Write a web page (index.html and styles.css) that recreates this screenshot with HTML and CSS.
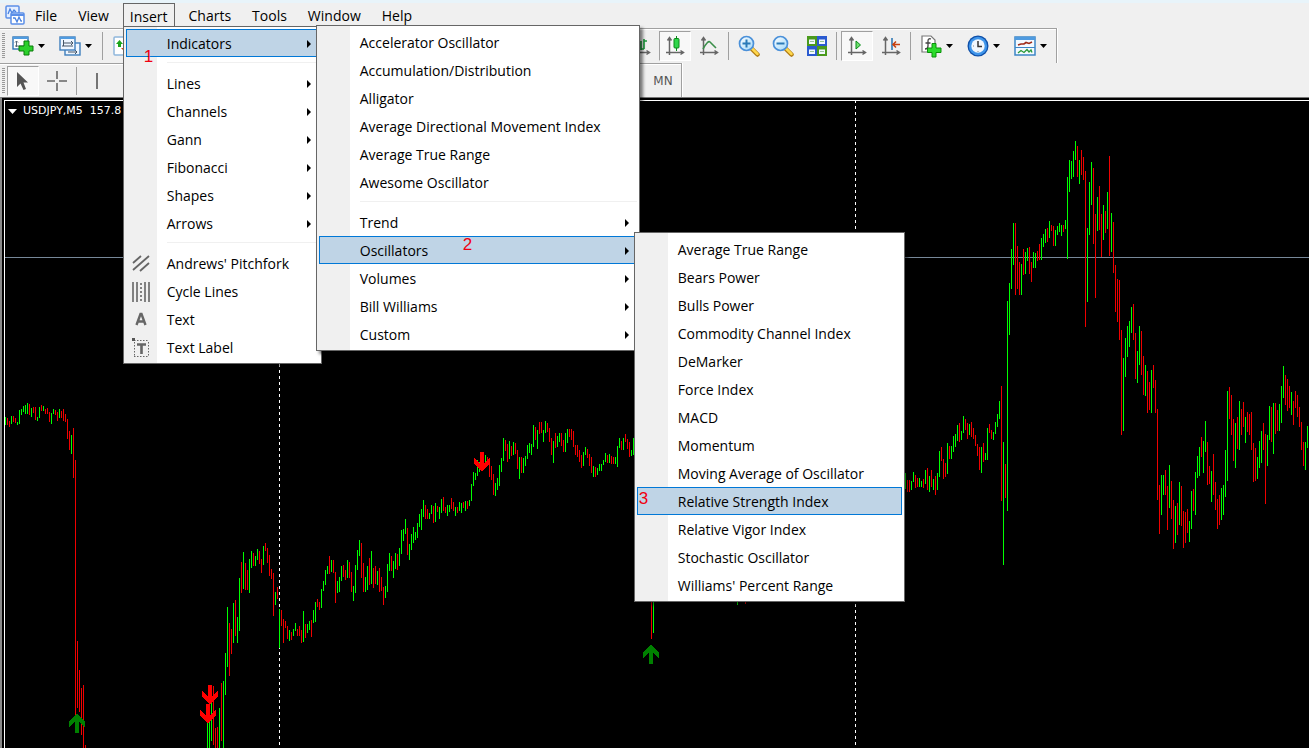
FILE: index.html
```html
<!DOCTYPE html>
<html lang="en">
<head>
<meta charset="utf-8">
<title>USDJPY,M5</title>
<link rel="stylesheet" href="styles.css">
</head>
<body>
<svg class="defs" width="0" height="0" aria-hidden="true">
  <defs>
    <symbol id="axes" viewBox="0 0 20 20"><path d="M4.500 2V19M1 16.500H18M2.500 4.500L4.500 1.500L6.500 4.500M15.500 14.500L18.500 16.500L15.500 18.500" fill="none" stroke="#666" stroke-width="1.500"/></symbol>
    <symbol id="caret" viewBox="0 0 7 4"><path d="M0 0H7L3.500 4Z"/></symbol>
    <symbol id="up" viewBox="-9 0 18 19"><path d="M0 0L8 7V13L2 8V19H-2V8L-8 13V7Z"/></symbol>
    <linearGradient id="glass" x2="1" y2="1"><stop offset="0" stop-color="#fff"/><stop offset="1" stop-color="#9fd8fa"/></linearGradient>
    <symbol id="lens" viewBox="0 0 22 22"><path d="M13 13L19.500 19.500" stroke="#b07a10" stroke-width="4.500" stroke-linecap="round"/><path d="M13.500 13L19.500 19" stroke="#ffd84d" stroke-width="2.500" stroke-linecap="round"/><circle cx="8.500" cy="8.500" r="7" fill="url(#glass)" stroke="#4a90d9" stroke-width="1.700"/></symbol>
  </defs>
</svg>

<nav class="menubar" aria-label="Main menu">
  <svg class="logo" width="20" height="20" viewBox="0 0 20 20"><rect x="1" y="1" width="13" height="12" rx="1" fill="#e4eeff" stroke="#5b8fe8" stroke-width="1.500"/><path d="M3 9L5 4L7 8L9 5L11 7" fill="none" stroke="#4a82e0" stroke-width="1.300"/><rect x="6" y="8" width="13" height="11" rx="1" fill="#fff" stroke="#5b8fe8" stroke-width="1.500"/><path d="M6 10H19" stroke="#5b8fe8" stroke-width="2"/><path d="M8 13L10 13L12 17L14 12L16 16L17 16" fill="none" stroke="#4a82e0" stroke-width="1.300"/></svg>
  <button class="top">File</button>
  <button class="top">View</button>
  <div class="host">
    <button class="top open" aria-expanded="true">Insert</button>
    <div class="menu menu-insert">
      <div class="host">
        <button class="item on sub">Indicators</button>
        <span class="note note-1">1</span>
        <div class="menu menu-indicators">
          <button class="item">Accelerator Oscillator</button>
          <button class="item">Accumulation/Distribution</button>
          <button class="item">Alligator</button>
          <button class="item">Average Directional Movement Index</button>
          <button class="item">Average True Range</button>
          <button class="item">Awesome Oscillator</button>
          <hr>
          <button class="item sub">Trend</button>
          <div class="host">
            <button class="item on sub">Oscillators</button>
            <span class="note note-2">2</span>
            <div class="menu menu-oscillators">
              <button class="item">Average True Range</button>
              <button class="item">Bears Power</button>
              <button class="item">Bulls Power</button>
              <button class="item">Commodity Channel Index</button>
              <button class="item">DeMarker</button>
              <button class="item">Force Index</button>
              <button class="item">MACD</button>
              <button class="item">Momentum</button>
              <button class="item">Moving Average of Oscillator</button>
              <div class="host">
                <button class="item on">Relative Strength Index</button>
                <span class="note note-3">3</span>
              </div>
              <button class="item">Relative Vigor Index</button>
              <button class="item">Stochastic Oscillator</button>
              <button class="item">Williams' Percent Range</button>
            </div>
          </div>
          <button class="item sub">Volumes</button>
          <button class="item sub">Bill Williams</button>
          <button class="item sub">Custom</button>
        </div>
      </div>
      <hr>
      <button class="item sub">Lines</button>
      <button class="item sub">Channels</button>
      <button class="item sub">Gann</button>
      <button class="item sub">Fibonacci</button>
      <button class="item sub">Shapes</button>
      <button class="item sub">Arrows</button>
      <hr>
      <button class="item"><svg class="mark" width="18" height="18" viewBox="0 0 18 18"><path d="M1 9L9 2M1 16L17 2M8 17L17 9" fill="none" stroke="#666" stroke-width="1.800"/></svg>Andrews' Pitchfork</button>
      <button class="item"><svg class="mark" width="18" height="20" viewBox="0 0 18 20"><path d="M1 0V20M5 0V20M13 0V20M17 0V20" stroke="#666" stroke-width="1.600"/><path d="M9 1V20" stroke="#666" stroke-width="1.600" stroke-dasharray="2 2"/></svg>Cycle Lines</button>
      <button class="item"><svg class="mark" width="18" height="18" viewBox="0 0 18 18"><path d="M4.500 15L8.500 4H9.500L13.500 15M6 11.500H12" fill="none" stroke="#666" stroke-width="2.400"/></svg>Text</button>
      <button class="item"><svg class="mark" width="18" height="20" viewBox="0 0 18 20"><path d="M2 2.500H17M2.500 4V19M16.500 4V19M2 18.500H17" stroke="#666" stroke-dasharray="1.500 1.500"/><path d="M0 1.500H3" stroke="#555" stroke-width="3"/><path d="M5 6.500H14M9.500 6V16" stroke="#666" stroke-width="2.600"/></svg>Text Label</button>
    </div>
  </div>
  <button class="top">Charts</button>
  <button class="top">Tools</button>
  <button class="top">Window</button>
  <button class="top">Help</button>
</nav>

<div class="toolbar">
  <span class="grip"></span>
  <button class="drop" aria-label="New chart">
    <svg width="22" height="22" viewBox="0 0 22 22"><rect x="1" y="2" width="15" height="12" fill="#fff" stroke="#2f75b5" stroke-width="1.400"/><path d="M1 3H16" stroke="#4f9be0" stroke-width="2"/><path d="M4.500 6V12M3 7.500L4.500 6L6 7.500M3 11L13 11" fill="none" stroke="#567"/><path d="M12 6H17V11H21V16H17V20H12V16H7V11H12Z" fill="#2bd02b" stroke="#087a08"/></svg>
    <svg width="7" height="4"><use href="#caret"/></svg>
  </button>
  <button class="drop" aria-label="Profiles">
    <svg width="22" height="22" viewBox="0 0 22 22"><rect x="6" y="8" width="15" height="12" fill="#eef6ff" stroke="#3f7fbd" stroke-width="1.400"/><path d="M9 17H18M16 15L18 17L16 19" fill="none" stroke="#456"/><rect x="1" y="2" width="15" height="13" fill="#eef6ff" stroke="#3f7fbd" stroke-width="1.400"/><path d="M1 3H16" stroke="#4f9be0" stroke-width="2"/><path d="M4.500 5V11M3 11H14M5 8H13M12 6L14 8L12 10" fill="none" stroke="#456"/></svg>
    <svg width="7" height="4"><use href="#caret"/></svg>
  </button>
  <span class="sep"></span>
  <button class="tool" aria-label="Market watch"><svg width="20" height="20" viewBox="0 0 20 20"><rect x="1" y="1" width="18" height="18" rx="1" fill="#fff" stroke="#8fb6dc" stroke-width="1.500"/><path d="M6.500 4L10 8H8V11H5V8H3Z" fill="#1ca51c"/><path d="M12 16L8 12H16Z" fill="#d9480f"/></svg></button>
  <span class="stretch"></span>
  <button class="tool" aria-label="Bar chart"><svg width="20" height="20" viewBox="0 0 20 20"><use href="#axes"/><path d="M10 5V14M13 3V13M13 5H16M10 13H13" stroke="#1a9a3a" stroke-width="1.600"/></svg></button>
  <button class="tool pressed" aria-label="Candlesticks"><svg width="20" height="20" viewBox="0 0 20 20"><use href="#axes"/><path d="M11.500 0V15" stroke="#0a8a1a"/><rect x="9" y="2.500" width="5" height="9.500" rx="1" fill="#2fd64a" stroke="#0a8a1a"/></svg></button>
  <button class="tool" aria-label="Line chart"><svg width="20" height="20" viewBox="0 0 20 20"><use href="#axes"/><path d="M4 13Q9 4 11 6T17 12" fill="none" stroke="#3b8f4a" stroke-width="1.600"/></svg></button>
  <span class="sep"></span>
  <button class="tool" aria-label="Zoom in"><svg width="22" height="22"><use href="#lens"/><path d="M4.500 8.500H12.500M8.500 4.500V12.500" stroke="#2a7ab8" stroke-width="2"/></svg></button>
  <button class="tool" aria-label="Zoom out"><svg width="22" height="22"><use href="#lens"/><path d="M4.500 8.500H12.500" stroke="#2a7ab8" stroke-width="2"/></svg></button>
  <button class="tool" aria-label="Tile windows"><svg width="22" height="22" viewBox="0 0 22 22"><path d="M1 1H11V11H1ZM11 11H21V21H11Z" fill="#4a9a1c"/><path d="M11 1H21V11H11ZM1 11H11V21H1Z" fill="#2a5ad0"/><path d="M3 4.500H9V9H3ZM13 4.500H19V9H13ZM3 14.500H9V19H3ZM13 14.500H19V19H13Z" fill="#f2f8ff"/><path d="M4 6.500H8M14 6.500H18M4 16.500H8M14 16.500H18" stroke="#9bc49b"/></svg></button>
  <span class="sep"></span>
  <button class="tool pressed" aria-label="Auto scroll"><svg width="20" height="20" viewBox="0 0 20 20"><use href="#axes"/><path d="M9 5L13.500 9L9 13Z" fill="#6ee06e" stroke="#0a8a1a"/></svg></button>
  <button class="tool" aria-label="Chart shift"><svg width="20" height="20" viewBox="0 0 20 20"><use href="#axes"/><path d="M11 2V14" stroke="#2570b0" stroke-width="1.500"/><path d="M12 8.500H19M15 5.500L12 8.500L15 11.500" fill="none" stroke="#c8400f" stroke-width="1.600"/></svg></button>
  <span class="sep"></span>
  <button class="drop" aria-label="Indicator list">
    <svg width="22" height="24" viewBox="0 0 22 24"><path d="M2 2H11L15 6V18H2Z" fill="#fff" stroke="#777" stroke-width="1.200"/><path d="M11 5Q8 4 8 7V12Q8 15 5 15M5.500 9H10.500" fill="none" stroke="#444" stroke-width="1.300"/><path d="M12 9.500H16V14H21V18.500H16V23H12V18.500H7.500V14H12Z" fill="#2bdc2b" stroke="#0a8f0a"/></svg>
    <svg width="7" height="4"><use href="#caret"/></svg>
  </button>
  <button class="drop" aria-label="Periods">
    <svg width="22" height="22" viewBox="0 0 22 22"><circle cx="11" cy="11" r="10.500" fill="#0f4fa8"/><circle cx="11" cy="11" r="9.200" fill="#3f95ea"/><circle cx="11" cy="11" r="6.700" fill="#f0f6fc"/><path d="M11 6V11.500H15" fill="none" stroke="#333" stroke-width="1.500"/><path d="M6 11H7M11 16V17" stroke="#888"/></svg>
    <svg width="7" height="4"><use href="#caret"/></svg>
  </button>
  <button class="drop" aria-label="Templates">
    <svg width="22" height="20" viewBox="0 0 22 20"><rect x="1" y="1" width="20" height="18" fill="#f4faff" stroke="#3d86c6" stroke-width="1.500"/><path d="M1 2.500H21" stroke="#4f9be0" stroke-width="3"/><path d="M1 11.500H21" stroke="#3d86c6"/><path d="M4 9L7 8L10 8L12 6.500L15 7.500L18 6" fill="none" stroke="#a02c18" stroke-width="1.600"/><path d="M4 17L7 14.500L10 16.500L13 13.500L15 16L17 14L18 16.500" fill="none" stroke="#2a9a3a" stroke-width="1.300"/></svg>
    <svg width="7" height="4"><use href="#caret"/></svg>
  </button>
</div>

<div class="toolbar second">
  <span class="grip"></span>
  <button class="tool pressed" aria-label="Cursor"><svg width="20" height="20" viewBox="0 0 20 20"><path d="M4 1V16L7.500 12.500L10.500 19L13 18L10.500 11.500H15Z" fill="#555"/></svg></button>
  <button class="tool" aria-label="Crosshair"><svg width="20" height="20" viewBox="0 0 20 20"><path d="M10 0V8M10 12V20M0 10H8M12 10H20" stroke="#666" stroke-width="1.600"/></svg></button>
  <span class="sep"></span>
  <button class="tool" aria-label="Vertical line"><svg width="20" height="20" viewBox="0 0 20 20"><path d="M10 2V18" stroke="#666" stroke-width="1.800"/></svg></button>
  <span class="stretch"></span>
  <button class="tool period">MN</button>
</div>

<main class="chart">
  <div class="plot">
    <svg class="bars" width="100%" height="100%" aria-label="USDJPY five minute bars">
      <path d="M0 156.500H6000" stroke="#778899"/>
      <path d="M274.500 -1V3000M850.500 -1V3000" stroke="#fff" stroke-dasharray="3 3"/>
      <g transform="translate(-5 -101)">
        <path id="rise" stroke="#00ff00"/>
        <path id="fall" stroke="#f00000"/>
        <g fill="#008000">
          <use href="#up" x="68" y="714" width="18" height="19"/>
          <use href="#up" x="642" y="645" width="18" height="19"/>
        </g>
        <g fill="#ff0000">
          <use href="#up" width="18" height="19" transform="translate(219 704) rotate(180)"/>
          <use href="#up" width="18" height="19" transform="translate(217 723) rotate(180)"/>
          <use href="#up" width="18" height="19" transform="translate(491 471) rotate(180)"/>
        </g>
      </g>
    </svg>
    <div class="caption"><svg width="9" height="5" viewBox="0 0 9 5"><path d="M0 0H9L4.500 5Z" fill="#fff"/></svg><span>USDJPY,M5&nbsp; 157.8</span></div>
  </div>
</main>
<script src="chart.js"></script>
</body>
</html>
```

FILE: styles.css
```css
* { box-sizing: border-box; }
body {
  margin: 0;
  height: 100vh;
  overflow: hidden;
  display: flex;
  flex-direction: column;
  background: #f0f0f0;
  border-top: 3px solid #e8f4fa;
  font: 14px/20px "Open Sans", "Noto Sans", sans-serif;
  color: #000;
}
.defs { position: absolute; }
button {
  margin: 0;
  padding: 0;
  border: 0;
  background: none;
  font: inherit;
  color: inherit;
}
.menubar {
  display: flex;
  flex: none;
  height: 25px;
  padding-left: 5px;
  padding-bottom: 1px;
}
.logo { margin: 2px 3px 0 0; }
.host { position: relative; }
.top {
  height: 24px;
  margin: 0 7px 0 0;
  padding: 2px 6px 0;
  border: 1px solid transparent;
  white-space: nowrap;
}
.open { border-color: #666; border-bottom: 0; }

.menu {
  position: absolute;
  z-index: 5;
  padding: 2px;
  border: 1px solid #666;
  background: linear-gradient(to right, #f0f0f0 33px, #fff 33px);
  box-shadow: 3px 3px 3px rgba(0, 0, 0, 0.5);
}
.menu-insert { top: 23px; left: 0; width: 199px; }
.menu-indicators { top: -4px; left: calc(100% - 3px); width: 324px; }
.menu-oscillators { top: -4px; left: calc(100% - 3px); width: 271px; }
.item {
  position: relative;
  display: block;
  width: 100%;
  height: 28px;
  padding: 2px 0 0 40px;
  border: 1px solid transparent;
  text-align: left;
  white-space: nowrap;
}
.on { background: #bfd4e6; border-color: #0078d7; }
.sub::after {
  content: "";
  position: absolute;
  top: 10px;
  right: 7px;
  border: 4px solid transparent;
  border-left-color: #000;
  border-right: 0;
}
.mark { position: absolute; left: 5px; top: 4px; }
.menu hr {
  height: 1px;
  margin: 5px 0 6px 41px;
  border: 0;
  background: #f0f0f0;
}
.note {
  position: absolute;
  z-index: 4;
  font: 17px/20px "Liberation Sans", Arial, sans-serif;
  color: #f00010;
}
.note-1 { left: 18px; top: 18px; }
.note-2 { left: 144px; top: -1px; }
.note-3 { left: 2px; top: 2px; }

.toolbar {
  display: flex;
  flex: none;
  align-self: flex-start;
  align-items: center;
  gap: 2px;
  height: 35px;
  padding: 0 2px;
  border: 1px solid #a0a0a0;
  border-left: 0;
  border-bottom: 0;
  box-shadow: inset 0 1px #fff, 1px 0 #fff;
}
.second { height: 34px; }
.grip {
  width: 3px;
  height: 26px;
  background: repeating-linear-gradient(#999 0 1px, #f0f0f0 1px 2px);
}
.tool {
  display: grid;
  place-items: center;
  width: 32px;
  height: 30px;
}
.pressed {
  border: 1px solid #fff;
  border-top-color: #a0a0a0;
  border-left-color: #a0a0a0;
  background: #f8f8f8;
}
.drop {
  display: flex;
  align-items: center;
  gap: 4px;
  width: 45px;
  height: 30px;
  padding-left: 5px;
}
.sep {
  width: 1px;
  height: 28px;
  margin: 0 2px 0 1px;
  background: #a0a0a0;
}
.stretch { width: 482px; }
.second .stretch { width: 530px; }
.period {
  font: 12px/16px "DejaVu Sans", sans-serif;
  color: #555;
}

.chart {
  flex: 1;
  display: flex;
  min-height: 0;
  padding: 2px 0 0 2px;
  border-top: 1px solid #777;
  border-left: 2px solid #888;
  background: #000;
}
.plot {
  position: relative;
  flex: 1;
  border-top: 1px solid #fff;
  border-left: 1px solid #fff;
  overflow: hidden;
}
.bars { position: absolute; inset: 0; shape-rendering: crispEdges; }
.caption {
  position: relative;
  display: flex;
  align-items: center;
  gap: 6px;
  padding: 2px 3px;
  font: 11px/16px "DejaVu Sans", sans-serif;
  color: #fff;
}
```

FILE: chart.js
```js
// Each run: first x, then one bar every two pixels as direction + high-low.
const runs = [
  [5, "g417-425 r418-425 r421-427 g416-424 r416-422 r418-423 g422-425 g410-424 g409-415 g406-412 g405-414 g403-414 r404-415 g408-417 r407-413 r407-420 g417-421 g407-418 r405-411 g406-411 r409-414 r408-414 r412-422 g413-424 g409-414 r410-415 r412-421 g409-418 r411-418 r409-421 r414-422 r419-439 r431-450 g435-454 r428-478 r460-715 r641-708 r670-712 r688-735 r685-748 r745-748"],
  [207, "g722-900 g713-900 g702-741 r686-745 r728-900 r727-900 g708-900 r683-741 g681-900 g653-695 g607-667 r623-676 r629-654 g603-643 r600-636 g617-643 g578-631 r562-593 g552-589 r563-590 r570-590 g559-593 g551-568 r553-566 g556-566 g549-560 r551-564 r559-573 g546-565 r543-551 r548-563 r555-576 r569-579 r573-616 g592-605 r587-599 g609-648 r610-626 r619-643 r621-628 r626-639 g630-641 r632-640 g629-636 g623-631 r629-636 r626-636 r630-643 g611-642 r624-638 g624-633 g621-630 r620-637 g610-623 g602-622 r599-607 r602-610 g589-608 g581-591 g570-585 g566-574 r556-574 g560-572 r560-573 r572-603 g581-593 g577-592 g566-581 r565-577 r570-580 g560-578 r562-578 r572-592 g586-601 g565-593 g550-570 g540-556 r543-578 r563-592 g577-592 g566-590 r558-585 g551-584 r568-588 r566-584 g571-585 r568-592 r577-591 r587-605 g586-598 g564-592 g553-571 r556-571 g561-578 g553-569 r554-570 g548-566 g530-554 g529-541 g519-534 r528-555 g544-560 g534-550 g527-543 g532-540 g523-538 g514-527 g509-530 g500-517 r505-519 r509-519 g513-519 g505-514 r506-523 g503-522 r506-512 g507-519 g499-513 r497-511 r507-513 g505-516 g505-512 r498-509 r502-511 g507-516 r507-513 g502-511 g503-513 r502-508 g501-511 r501-509 g500-506 g484-501 g472-486 g473-480 g460-476 g462-472 g457-467 g456-466 g455-463 r457-464 r458-477 r466-480 r474-495 g483-496 g478-490 g465-486 g458-472 g438-461 r440-451 r444-462 g441-459 r446-456 g442-455 r443-454 r450-469 g457-479 r457-473 g458-473 g456-466 g445-459 g443-453 g444-455 g425-447 r427-440 g430-449 r422-434 r422-433 g430-442 g421-433 r423-432 r428-442 r438-455 g441-463 r433-448 g436-447 g433-442 r433-446 r440-452 g433-452 g429-443 r429-437 r429-440 r431-447 r445-455 r445-457 r450-462 r455-468 g452-466 g447-455 r449-458 r454-466 r457-473 g466-477 r467-477 g468-475 g464-471 g464-471 g460-465 g453-462 r455-463 g454-463 r456-464 r457-464 g457-464 g446-467 g438-448 r441-450 g438-450 r434-442 r439-449 r442-457 g450-456 g438-455 r438-449"],
  [651, "r602-639 g602-633"],
  [737, "g600-605"],
  [745, "r600-604"],
  [905, "g473-489 r480-492 r480-492 g481-490 g472-482 r475-488 r478-487 g478-487 g481-487 r479-488 g470-484 r468-490 g476-492 r470-487 g479-490 r476-495 g473-490 g451-477 r447-461 r459-479 r463-477 g443-474 r446-459 g446-459 g436-452 g434-447 g425-441 r423-442 g431-440 g416-433 r419-430 r423-439 g424-435 r422-437 r428-439 r435-446 r444-456 r447-470 g447-473 r443-462 g453-460 g428-460 r424-433 r430-439 g432-440 g422-434 g414-427 g401-419 r386-501 g442-565 r464-498 g301-511 g283-335 g249-289 g223-265 r223-295 r246-289 r262-295 g264-295 r249-275 g252-274 g248-261 r247-274 r262-282 g252-268 g253-268 r251-261 r244-260 g238-260 g234-247 g229-243 r228-242 g221-238 r225-231 r226-246 g230-246 g226-235 g223-232 g225-236 r225-232 g220-229 g177-259 g160-192 g161-179 g151-177 g141-160 r146-177 g160-184 r150-175 r157-180 r171-327 g228-302 g182-235 g162-205 r168-244 r214-298 g197-231 r186-230 r214-257 g205-240 r211-233 g192-229 r156-256 g213-252 r222-273 r265-312 r279-322 r280-340 r330-435 g358-431 g338-377 g326-357 g321-347 g307-333 r304-340 r333-379 g351-383 g326-365 r331-375 r356-395 g365-396 r371-413 r382-410 g370-413 r365-388 r380-413 r409-500 r485-534 g475-515 g475-495 r470-495 r486-530 g465-508 r481-519 r500-549 g506-543 r503-535 g482-525 r486-526 r511-548 r512-543 r509-533 g521-542 g491-529 r489-511 g472-515 g456-478 g447-476 r437-457 g441-473 g421-452 r442-485 r466-484 g471-502 r454-495 r482-510 r499-529 r495-525 g488-520 g485-515 g450-497 g391-481 r387-419 r395-435 r419-461 g423-468 r417-449 g401-450 r409-435 r402-427 g417-443 r412-432 r414-435 r412-450 r443-482 r448-481 g457-479 g441-468 g431-463 r423-450 r434-504 g435-466 g406-440 r407-442 g403-454 r403-434 r410-431 g404-431 g386-423 g366-398 r375-405 r379-411 r386-408 g392-415 r401-425 r391-408 r395-417 r407-427 r422-450 r442-466 g442-470 g426-448"]
];

const paths = { g: "", r: "" };
for (const [start, list] of runs) {
  list.split(" ").forEach((bar, i) => {
    const [high, low] = bar.slice(1).split("-");
    paths[bar[0]] += `M${start + i * 2 + 0.5} ${high}V${low}`;
  });
}
document.getElementById("rise").setAttribute("d", paths.g);
document.getElementById("fall").setAttribute("d", paths.r);
```
